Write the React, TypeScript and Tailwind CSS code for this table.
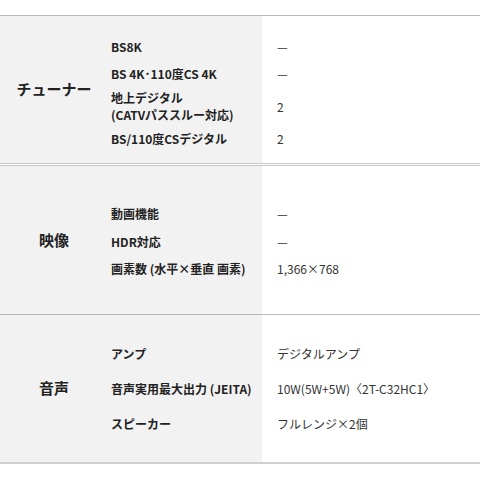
type Row = { label: string[]; value: string; h: number }

type Section = { title: string; pt: number; pb: number; rows: Row[] }

const sections: Section[] = [
  {
    title: "チューナー",
    pt: 17,
    pb: 11,
    rows: [
      { label: ["BS8K"], value: "—", h: 27 },
      { label: ["BS 4K･110度CS 4K"], value: "—", h: 27 },
      { label: ["地上デジタル", "(CATVパススルー対応)"], value: "2", h: 38 },
      { label: ["BS/110度CSデジタル"], value: "2", h: 27 },
    ],
  },
  {
    title: "映像",
    pt: 34,
    pb: 32,
    rows: [
      { label: ["動画機能"], value: "—", h: 27 },
      { label: ["HDR対応"], value: "—", h: 28 },
      { label: ["画素数 (水平×垂直 画素)"], value: "1,366×768", h: 27 },
    ],
  },
  {
    title: "音声",
    pt: 21,
    pb: 21,
    rows: [
      { label: ["アンプ"], value: "デジタルアンプ", h: 35 },
      { label: ["音声実用最大出力 (JEITA)"], value: "10W(5W+5W)〈2T-C32HC1〉", h: 35 },
      { label: ["スピーカー"], value: "フルレンジ×2個", h: 35 },
    ],
  },
]

function SpecSection({ s }: { s: Section }) {
  return (
    <div className="flex">
      <div className="flex w-[262px] bg-[#f2f2f2]">
        <div className="flex w-[108px] items-center justify-center text-[15px] font-bold text-[#222]">{s.title}</div>
        <div className="flex flex-1 flex-col" style={{ paddingTop: s.pt, paddingBottom: s.pb }}>
          {s.rows.map((r) => (
            <div key={r.label.join()} className="flex flex-col justify-center pl-[3px] text-[12px] font-bold leading-[17px] text-[#222]" style={{ height: r.h }}>
              {r.label.map((l) => (
                <span key={l}>{l}</span>
              ))}
            </div>
          ))}
        </div>
      </div>
      <div className="flex flex-1 flex-col bg-white pl-[15px]" style={{ paddingTop: s.pt, paddingBottom: s.pb }}>
        {s.rows.map((r) => (
          <div key={r.label.join()} className="flex items-center text-[12px] leading-[17px] text-[#333]" style={{ height: r.h }}>
            {r.value}
          </div>
        ))}
      </div>
    </div>
  )
}

export default function App() {
  return (
    <div className="h-[480px] w-[480px] bg-white pt-[15px] font-['Noto_Sans_CJK_JP',sans-serif]">
      <div className="border-t border-[#b8b8b8]">
        <SpecSection s={sections[0]} />
        <div className="h-[3px] border-y border-[#c8c8c8] bg-white" />
        <SpecSection s={sections[1]} />
        <div className="h-px bg-[#b8b8b8]" />
        <SpecSection s={sections[2]} />
        <div className="h-[2px] bg-[#d0d0d0]" />
      </div>
    </div>
  )
}
